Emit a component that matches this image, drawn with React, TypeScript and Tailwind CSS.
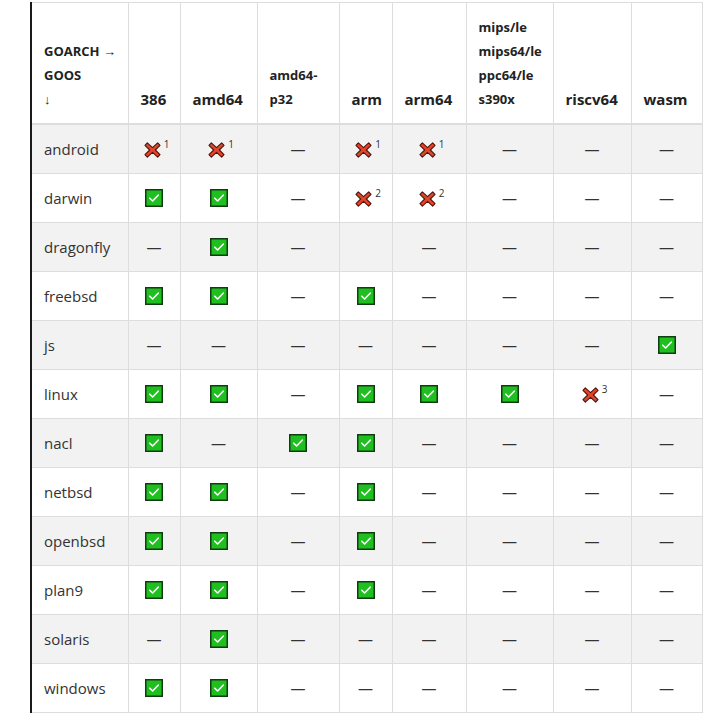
import React from 'react';

type Cell = 'y' | 'n' | '-' | '' | { x: number };

interface Row {
  goos: string;
  cells: Cell[];
}

const cols: { label: string[]; small: boolean; w: string }[] = [
  { label: ['386'], small: false, w: 'w-[52px]' },
  { label: ['amd64'], small: false, w: 'w-[77px]' },
  { label: ['amd64-', 'p32'], small: true, w: 'w-[82px]' },
  { label: ['arm'], small: false, w: 'w-[53px]' },
  { label: ['arm64'], small: false, w: 'w-[74px]' },
  { label: ['mips/le', 'mips64/le', 'ppc64/le', 's390x'], small: true, w: 'w-[87px]' },
  { label: ['riscv64'], small: false, w: 'w-[78px]' },
  { label: ['wasm'], small: false, w: 'w-[71px]' },
];

const rows: Row[] = [
  { goos: 'android', cells: [{ x: 1 }, { x: 1 }, '-', { x: 1 }, { x: 1 }, '-', '-', '-'] },
  { goos: 'darwin', cells: ['y', 'y', '-', { x: 2 }, { x: 2 }, '-', '-', '-'] },
  { goos: 'dragonfly', cells: ['-', 'y', '-', '', '-', '-', '-', '-'] },
  { goos: 'freebsd', cells: ['y', 'y', '-', 'y', '-', '-', '-', '-'] },
  { goos: 'js', cells: ['-', '-', '-', '-', '-', '-', '-', 'y'] },
  { goos: 'linux', cells: ['y', 'y', '-', 'y', 'y', 'y', { x: 3 }, '-'] },
  { goos: 'nacl', cells: ['y', '-', 'y', 'y', '-', '-', '-', '-'] },
  { goos: 'netbsd', cells: ['y', 'y', '-', 'y', '-', '-', '-', '-'] },
  { goos: 'openbsd', cells: ['y', 'y', '-', 'y', '-', '-', '-', '-'] },
  { goos: 'plan9', cells: ['y', 'y', '-', 'y', '-', '-', '-', '-'] },
  { goos: 'solaris', cells: ['-', 'y', '-', '-', '-', '-', '-', '-'] },
  { goos: 'windows', cells: ['y', 'y', '-', '-', '-', '-', '-', '-'] },
];

const CheckIcon = () => (
  <svg width="18" height="18" viewBox="0 0 18 18" className="inline-block align-middle">
    <rect x="0.75" y="0.75" width="16.5" height="16.5" fill="#1fbf1f" stroke="#123d12" strokeWidth="1.5" />
    <path d="M4.8 9.2 L7.6 12 L13.2 6.2" fill="none" stroke="#fff" strokeWidth="1.6" strokeLinecap="round" strokeLinejoin="round" />
  </svg>
);

const CrossIcon = ({ n }: { n: number }) => (
  <span className="inline-flex items-start ml-[5px]">
    <svg width="17" height="16" viewBox="0 0 18 17" className="inline-block mt-[3px]">
      <polygon
        points="1,3.5 3.5,1 9,6 14.5,1 17,3.5 12,8.5 17,13.5 14.5,16 9,11 3.5,16 1,13.5 6,8.5"
        fill="#e2452a"
        stroke="#4d150b"
        strokeWidth="1.2"
        strokeLinejoin="round"
      />
    </svg>
    <span className="text-[10px] leading-none ml-[3px] text-[#333]">{n}</span>
  </span>
);

const renderCell = (c: Cell) => {
  if (c === 'y') return <CheckIcon />;
  if (c === '-') return <span>—</span>;
  if (c === '') return null;
  return <CrossIcon n={c.x} />;
};

const App: React.FC = () => {
  return (
    <div className="w-[716px] h-[722px] bg-white pt-[2px]" style={{ fontFamily: '"Open Sans", "Noto Sans", sans-serif' }}>
      <div className="ml-[30px] w-[672px] border-l-2 border-[#1a1a1a]">
        <table className="table-fixed border-collapse w-[670px] text-[15px] text-[#333]">
          <colgroup>
            <col className="w-[96px]" />
            {cols.map((c, idx) => (
              <col key={idx} className={c.w} />
            ))}
          </colgroup>
          <thead>
            <tr className="bg-white">
              <th className="border-t border-r border-b-2 border-[#dddddd] pl-3 pr-1 py-3 text-left align-bottom font-bold text-[13px] leading-6 text-[#222] whitespace-nowrap">
                GOARCH →
                <br />
                GOOS
                <br />
                <span className="font-normal">↓</span>
              </th>
              {cols.map((c, idx) => (
                <th
                  key={idx}
                  className={`border-t border-x border-b-2 border-[#dddddd] px-3 py-3 text-left align-bottom font-bold leading-6 text-[#222] ${c.small ? 'text-[13px]' : 'text-[15px]'}`}
                >
                  {c.label.map((l, i) => (
                    <div key={i}>{l}</div>
                  ))}
                </th>
              ))}
            </tr>
          </thead>
          <tbody>
            {rows.map((r, idx) => (
              <tr key={r.goos} className={idx % 2 === 0 ? 'bg-[#f2f2f2]' : 'bg-white'}>
                <td className="border-r border-b border-[#dddddd] px-3 h-[49px] leading-6 text-left">{r.goos}</td>
                {r.cells.map((c, i) => (
                  <td key={i} className="border border-t-0 border-[#dddddd] px-1 h-[49px] leading-6 text-center">
                    <div className="flex items-center justify-center">{renderCell(c)}</div>
                  </td>
                ))}
              </tr>
            ))}
          </tbody>
        </table>
      </div>
    </div>
  );
};

export default App;
